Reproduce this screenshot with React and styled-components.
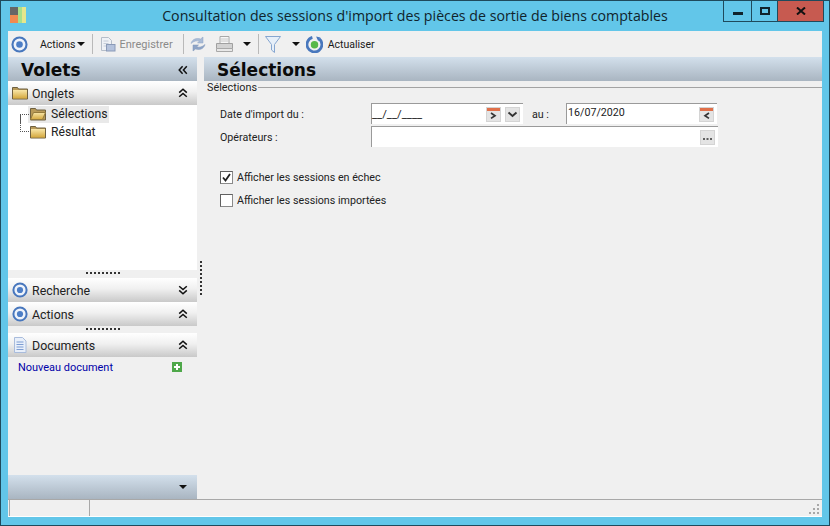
import React from "react";
import styled, { createGlobalStyle } from "styled-components";

const GlobalStyle = createGlobalStyle`
  html, body {
    margin: 0;
    padding: 0;
    background: #62c6e9;
  }
  body {
    font-family: Roboto, "Liberation Sans", Arial, sans-serif;
    font-size: 10.7px;
    color: #1a1a1a;
  }
`;

const Frame = styled.div`
  width: 830px;
  height: 526px;
  box-sizing: border-box;
  border: 1px solid #1f4a5c;
  background: #62c6e9;
  display: flex;
  flex-direction: column;
  overflow: hidden;
`;

const TitleBar = styled.div`
  height: 30px;
  flex: none;
  display: grid;
  grid-template-columns: 1fr auto 1fr;
`;

const TitleText = styled.div`
  font-family: "Open Sans", sans-serif;
  font-size: 14.2px;
  line-height: 30px;
  color: #10242c;
  white-space: nowrap;
`;

const AppLogo = styled.svg`
  width: 16px;
  height: 16px;
  margin: 6px 0 0 9px;
`;

const WindowButtons = styled.div`
  justify-self: end;
  display: flex;
  height: 21px;
  margin-right: 5px;
  border: 1px solid #1f4a5c;
  border-top: none;
  box-sizing: border-box;
`;

const WindowButton = styled.div`
  width: ${(p) => p.$width}px;
  box-sizing: border-box;
  padding-top: ${(p) => p.$top || 0}px;
  display: flex;
  align-items: center;
  justify-content: center;
  background: ${(p) => (p.$close ? "#c75a50" : "transparent")};
  border-left: ${(p) => (p.$first ? "none" : "1px solid #1f4a5c")};
`;

const Body = styled.div`
  flex: 1;
  min-height: 0;
  margin: 0 7px 8px 7px;
  display: flex;
  flex-direction: column;
  background: #f0f0f0;
`;

const Toolbar = styled.div`
  height: 26px;
  flex: none;
  display: flex;
  align-items: center;
  padding-left: 3px;
  background: #f0f0f0;
`;

const ToolText = styled.span`
  font-size: ${(p) => (p.$muted ? 11 : 10.5)}px;
  color: ${(p) => (p.$muted ? "#8a8a8a" : "#1a1a1a")};
  margin: ${(p) => p.$margin || "0"};
  white-space: nowrap;
`;

const ToolSep = styled.span`
  width: 1px;
  height: 20px;
  flex: none;
  background: #b9b9b9;
  margin: ${(p) => p.$margin || "0 5px"};
`;

const Caret = styled.span`
  width: 0;
  height: 0;
  flex: none;
  border-left: 4px solid transparent;
  border-right: 4px solid transparent;
  border-top: 4px solid #111;
  margin: ${(p) => p.$margin || "0"};
`;

const Icon = styled.svg`
  flex: none;
  margin-left: ${(p) => p.$ml || 0}px;
  transform: ${(p) => p.$rotate ? `rotate(${p.$rotate}deg)` : "none"};
`;

const Main = styled.div`
  flex: 1;
  min-height: 0;
  display: flex;
`;

const LeftPanel = styled.div`
  width: 189px;
  flex: none;
  display: flex;
  flex-direction: column;
`;

const SplitColumn = styled.div`
  width: 7px;
  flex: none;
  display: flex;
  align-items: center;
  justify-content: center;
`;

const VerticalGrip = styled.div`
  width: 2px;
  height: 34px;
  background: repeating-linear-gradient(#333 0 2px, transparent 2px 4px);
`;

const RightPanel = styled.div`
  flex: 1;
  min-width: 0;
  display: flex;
  flex-direction: column;
`;

const PanelHeader = styled.div`
  height: 24px;
  flex: none;
  box-sizing: border-box;
  display: flex;
  align-items: center;
  justify-content: space-between;
  padding: 1px ${(p) => p.$padRight || 0}px 0 ${(p) => p.$padLeft}px;
  background: linear-gradient(#d3e0ec, #a9b5c1);
`;

const PanelTitle = styled.div`
  font-family: "DejaVu Sans", sans-serif;
  font-weight: bold;
  font-size: 17px;
  color: #0b0b0b;
`;

const Section = styled.div`
  height: 24px;
  flex: none;
  box-sizing: border-box;
  display: flex;
  align-items: center;
  padding: 0 9px 0 4px;
  background: linear-gradient(#ffffff, #f0f0f0 45%, #c9c9c9);
`;

const SectionLabel = styled.span`
  flex: 1;
  margin: 1px 0 0 ${(p) => p.$ml || 4}px;
  font-size: 12.4px;
  color: #222;
`;

const TreeArea = styled.div`
  height: 165px;
  flex: none;
  background: #fff;
  box-sizing: border-box;
`;

const TreeRow = styled.div`
  position: relative;
  height: 18px;
  margin-left: 20px;
  display: flex;
  align-items: center;
  font-size: 12.2px;
  color: #222;
  &::before {
    content: "";
    position: absolute;
    left: -8px;
    top: ${(p) => (p.$last ? "-9px" : "9px")};
    height: ${(p) => (p.$last ? "18px" : "9px")};
    width: 9px;
    border-left: 1px dotted #555;
    border-bottom: ${(p) => (p.$last ? "1px dotted #555" : "none")};
    border-top: ${(p) => (p.$last ? "none" : "1px dotted #555")};
    box-sizing: border-box;
  }
`;

const TreeItem = styled.span`
  display: flex;
  align-items: center;
  gap: 5px;
  height: 17px;
  padding: 0 2px;
  background: ${(p) => (p.$selected ? "#e9e9e9" : "transparent")};
`;

const HorizontalGrip = styled.div`
  height: ${(p) => p.$height}px;
  flex: none;
  box-sizing: border-box;
  padding-top: 2px;
  display: flex;
  justify-content: center;
  background: #f0f0f0;
  &::after {
    content: "";
    width: 34px;
    height: 2px;
    background: repeating-linear-gradient(90deg, #333 0 2px, transparent 2px 4px);
  }
`;

const DocLinkRow = styled.div`
  flex: 1;
  display: flex;
  justify-content: space-between;
  align-items: flex-start;
  padding: 5px 15px 0 10px;
`;

const DocLink = styled.a`
  font-size: 10.95px;
  line-height: 11px;
  color: #0000a8;
`;

const PanelFooter = styled.div`
  height: 24px;
  flex: none;
  display: flex;
  align-items: center;
  justify-content: flex-end;
  padding-right: 10px;
  background: linear-gradient(#d3e0ec, #a9b5c1);
`;

const GroupHead = styled.div`
  display: flex;
  align-items: center;
  height: 12px;
  margin-left: 3px;
  font-size: 10.8px;
  color: #222;
  &::after {
    content: "";
    flex: 1;
    height: 1px;
    background: #a3a3a3;
    margin-left: 1px;
  }
`;

const Form = styled.div`
  padding: 10px 0 0 16px;
  display: flex;
  flex-direction: column;
`;

const FormRow = styled.div`
  display: flex;
  height: 21px;
  margin-bottom: ${(p) => p.$mb || 0}px;
`;

const FieldLabel = styled.label`
  width: ${(p) => p.$width}px;
  flex: none;
  box-sizing: border-box;
  padding: 1px 0 0 ${(p) => p.$pad || 0}px;
  font-size: 10.7px;
  line-height: 21px;
  color: #222;
`;

const InputBox = styled.div`
  width: ${(p) => p.$width}px;
  flex: none;
  box-sizing: border-box;
  display: flex;
  align-items: center;
  justify-content: flex-end;
  gap: 4px;
  padding-right: 3px;
  background: #fff;
  border-top: 1px solid #9a9a9a;
  border-left: 1px solid #9a9a9a;
`;

const InputValue = styled.span`
  flex: 1;
  font-size: ${(p) => p.$size || 10.7}px;
  padding-left: ${(p) => p.$pad || 0}px;
  margin-top: ${(p) => p.$mt || 0}px;
  color: #222;
`;

const CheckRow = styled.div`
  display: flex;
  align-items: center;
  height: 23px;
  font-size: 10.7px;
  color: #222;
  gap: 4px;
`;

const CheckBox = styled.span`
  width: 11px;
  height: 11px;
  background: #fff;
  border: 1px solid #8a8a8a;
  border-top-color: #606060;
  border-left-color: #606060;
  display: flex;
  align-items: center;
  justify-content: center;
`;

const StatusBar = styled.div`
  height: 18px;
  flex: none;
  display: flex;
  box-sizing: border-box;
  padding-left: 1px;
  background: #f0f0f0;
  border-top: 1px solid #a8a8a8;
  border-bottom: 1px solid #fff;
  position: relative;
`;

const StatusCell = styled.div`
  width: ${(p) => p.$width}px;
  flex: ${(p) => (p.$grow ? 1 : "none")};
  border-left: 1px solid #a8a8a8;
`;

const Grip = styled.svg`
  position: absolute;
  right: 2px;
  bottom: 1px;
  width: 12px;
  height: 12px;
`;

const Target = ({ size = 16, ml }) => (
  <Icon width={size} height={size} viewBox="0 0 16 16" $ml={ml}>
    <circle cx="8" cy="8" r="6.6" fill="#eef3fb" stroke="#4877bd" strokeWidth="2" />
    <circle cx="8" cy="8" r="3.1" fill="#4d7ec6" />
  </Icon>
);

const Folder = ({ open, defs }) => (
  <Icon width="16" height="14" viewBox="0 0 16 14">
    <defs>
      <linearGradient id={defs} x1="0" y1="0" x2="0" y2="1">
        <stop offset="0" stopColor="#f8e6a8" />
        <stop offset="1" stopColor="#d4a83e" />
      </linearGradient>
    </defs>
    <path d="M0.5 3V1.5h5l1 1.5h9v10h-15z" fill="#b89a58" stroke="#6e6040" strokeWidth="1" />
    {open ? (
      <path d="M0.5 12.5L3.5 5.5h12l-3 7z" fill={`url(#${defs})`} stroke="#947a3c" />
    ) : (
      <rect x="1" y="4" width="14" height="8.5" fill={`url(#${defs})`} />
    )}
  </Icon>
);

const Chevrons = ({ down, left }) => (
  <Icon width="10" height="10" viewBox="0 0 10 10" $rotate={left ? -90 : down ? 180 : 0}>
    <path d="M1.2 4.6L5 1.2 8.8 4.6M1.2 8.8L5 5.4 8.8 8.8" fill="none" stroke="#111" strokeWidth="1.5" />
  </Icon>
);

const DocIcon = () => (
  <Icon width="14" height="16" viewBox="0 0 14 16" $ml={1}>
    <path d="M1.5.5h8l3.5 3.5v11.5h-11.5z" fill="#e8effa" stroke="#a9bcdc" />
    <path d="M3.5 5h7M3.5 7.5h7M3.5 10h7M3.5 12.5h7" stroke="#7d9dd3" />
  </Icon>
);

const SmallButton = ({ children }) => (
  <Icon width="15" height="15" viewBox="0 0 15 15">
    <rect x="0.5" y="0.5" width="14" height="14" fill="#e4e4e4" stroke="#d4d4d4" />
    {children}
  </Icon>
);

const CalendarRight = () => (
  <SmallButton>
    <rect x="1" y="1" width="13" height="3" fill="#e0704a" />
    <path d="M5 6l4 2.7L5 11.4" fill="none" stroke="#333" strokeWidth="1.7" />
  </SmallButton>
);

const CalendarLeft = () => (
  <SmallButton>
    <rect x="1" y="1" width="13" height="3" fill="#e0704a" />
    <path d="M10 6L6 8.7l4 2.7" fill="none" stroke="#333" strokeWidth="1.7" />
  </SmallButton>
);

const DropButton = () => (
  <SmallButton>
    <path d="M3.5 5.5l4 3.5 4-3.5" fill="none" stroke="#333" strokeWidth="1.9" />
  </SmallButton>
);

const DotsButton = () => (
  <SmallButton>
    <path d="M3 9h2M6.5 9h2M10 9h2" stroke="#333" strokeWidth="1.6" />
  </SmallButton>
);

export default function App() {
  return (
    <Frame>
      <GlobalStyle />
      <TitleBar>
        <AppLogo viewBox="0 0 16 16">
          <rect x="0" y="0" width="8" height="8" fill="#666" />
          <rect x="0" y="8" width="8" height="8" fill="#f08a50" />
          <rect x="8" y="0" width="4" height="16" fill="#a8e08c" />
          <rect x="12" y="0" width="4" height="16" fill="#e6e68c" />
        </AppLogo>
        <TitleText>Consultation des sessions d'import des pièces de sortie de biens comptables</TitleText>
        <WindowButtons>
          <WindowButton $width={27} $first $top={5}>
            <svg width="10" height="3"><rect width="10" height="3" fill="#10242c" /></svg>
          </WindowButton>
          <WindowButton $width={26}>
            <svg width="10" height="8"><rect x="1" y="1" width="8" height="6" fill="none" stroke="#10242c" strokeWidth="2" /></svg>
          </WindowButton>
          <WindowButton $width={46} $close>
            <svg width="10" height="8" viewBox="0 0 10 8"><path d="M1 0.5l8 7M9 0.5l-8 7" stroke="#111" strokeWidth="2" /></svg>
          </WindowButton>
        </WindowButtons>
      </TitleBar>
      <Body>
        <Toolbar>
          <Target size={17} />
          <ToolText $margin="0 1px 0 12px">Actions</ToolText>
          <Caret />
          <ToolSep $margin="0 7px 0 7px" />
          <Icon width="16" height="16" viewBox="0 0 16 16">
            <path d="M1.5 1.5h7l3 3v10h-10z" fill="#eef1f6" stroke="#b5bdc9" />
            <path d="M3.5 5h5M3.5 7.5h5M3.5 10h3" stroke="#c4ccd8" />
            <rect x="6.5" y="8.5" width="8.5" height="6.5" fill="#b4c2dc" stroke="#8a9ab8" />
          </Icon>
          <ToolText $muted $margin="0 0 0 4px">Enregistrer</ToolText>
          <ToolSep $margin="0 6px 0 10px" />
          <Icon width="16" height="16" viewBox="0 0 16 16">
            <path d="M1 7.5C2 3.5 6 1.5 10.5 3L13 1v6H7.5l1.8-1.8C6.5 4.4 4 5 1 7.5z" fill="#a9bbd6" stroke="#8ea4c6" strokeWidth="0.5" />
            <path d="M15 8.5c-1 4-5 6-9.500 4.500L3 15V9h5.500l-1.800 1.800c2.800.8 5.300.2 8.300-2.300z" fill="#8ea4c6" stroke="#7e95b9" strokeWidth="0.5" />
          </Icon>
          <Icon width="20" height="18" viewBox="0 0 20 18" $ml={9}>
            <path d="M5 1.500h9v7H5z" fill="#f7f7f7" stroke="#a8a8a8" />
            <path d="M5.500 4h8M5.500 6h8" stroke="#c8c8c8" />
            <path d="M1.500 8.500h16v5h-16z" fill="#d2d2d2" stroke="#a0a0a0" />
            <path d="M1.500 13.500h16v3h-16z" fill="#e8e8e8" stroke="#a8a8a8" />
          </Icon>
          <Caret $margin="0 0 0 8px" />
          <ToolSep $margin="0 6px 0 7px" />
          <Icon width="16" height="17" viewBox="0 0 16 17">
            <path d="M0.500 0.500h15L9.500 8.500v8l-3-2.500V8.500z" fill="#e6eff9" stroke="#86a6d0" />
          </Icon>
          <Caret $margin="0 0 0 11px" />
          <Icon width="17" height="17" viewBox="0 0 16 16" $ml={6}>
            <path d="M12.500 2.700A7 7 0 1 1 6 1.300" fill="none" stroke="#4877bd" strokeWidth="2.600" />
            <path d="M9.500 0.500l4 1-2 3.500z" fill="#4877bd" />
            <circle cx="8" cy="8.300" r="3.500" fill="#58b848" />
          </Icon>
          <ToolText $margin="0 0 0 5px">Actualiser</ToolText>
        </Toolbar>
        <Main>
          <LeftPanel>
            <PanelHeader $padLeft={13} $padRight={9}>
              <PanelTitle>Volets</PanelTitle>
              <Chevrons left />
            </PanelHeader>
            <Section>
              <Folder defs="onglets" />
              <SectionLabel>Onglets</SectionLabel>
              <Chevrons />
            </Section>
            <TreeArea>
              <TreeRow>
                <TreeItem $selected>
                  <Folder open defs="selections" />
                  Sélections
                </TreeItem>
              </TreeRow>
              <TreeRow $last>
                <TreeItem>
                  <Folder defs="resultat" />
                  Résultat
                </TreeItem>
              </TreeRow>
            </TreeArea>
            <HorizontalGrip $height={8} />
            <Section>
              <Target />
              <SectionLabel>Recherche</SectionLabel>
              <Chevrons down />
            </Section>
            <Section>
              <Target />
              <SectionLabel>Actions</SectionLabel>
              <Chevrons />
            </Section>
            <HorizontalGrip $height={7} />
            <Section>
              <DocIcon />
              <SectionLabel $ml={5}>Documents</SectionLabel>
              <Chevrons />
            </Section>
            <DocLinkRow>
              <DocLink>Nouveau document</DocLink>
              <svg width="10" height="10" viewBox="0 0 10 10">
                <rect width="10" height="10" fill="#4fa84a" />
                <path d="M5 2v6M2 5h6" stroke="#fff" strokeWidth="2" />
              </svg>
            </DocLinkRow>
            <PanelFooter>
              <Caret />
            </PanelFooter>
          </LeftPanel>
          <SplitColumn>
            <VerticalGrip />
          </SplitColumn>
          <RightPanel>
            <PanelHeader $padLeft={13}>
              <PanelTitle>Sélections</PanelTitle>
            </PanelHeader>
            <GroupHead>Sélections</GroupHead>
            <Form>
              <FormRow $mb={2}>
                <FieldLabel $width={151}>Date d'import du :</FieldLabel>
                <InputBox $width={152}>
                  <InputValue $size={11.3}>__/__/____</InputValue>
                  <CalendarRight />
                  <DropButton />
                </InputBox>
                <FieldLabel $width={43} $pad={9}>au :</FieldLabel>
                <InputBox $width={151}>
                  <InputValue $pad={1} $mt={-4}>16/07/2020</InputValue>
                  <CalendarLeft />
                </InputBox>
              </FormRow>
              <FormRow $mb={19}>
                <FieldLabel $width={151}>Opérateurs :</FieldLabel>
                <InputBox $width={347}>
                  <DotsButton />
                </InputBox>
              </FormRow>
              <CheckRow>
                <CheckBox>
                  <svg width="9" height="9" viewBox="0 0 9 9"><path d="M1 4.500l2.500 3L8 1" fill="none" stroke="#222" strokeWidth="1.800" /></svg>
                </CheckBox>
                Afficher les sessions en échec
              </CheckRow>
              <CheckRow>
                <CheckBox />
                Afficher les sessions importées
              </CheckRow>
            </Form>
          </RightPanel>
        </Main>
        <StatusBar>
          <StatusCell $width={79} />
          <StatusCell $grow />
          <Grip viewBox="0 0 12 12">
            <path d="M9 1h2v2H9zM5 5h2v2H5zM9 5h2v2H9zM1 9h2v2H1zM5 9h2v2H5zM9 9h2v2H9z" fill="#a8a8a8" />
          </Grip>
        </StatusBar>
      </Body>
    </Frame>
  );
}
